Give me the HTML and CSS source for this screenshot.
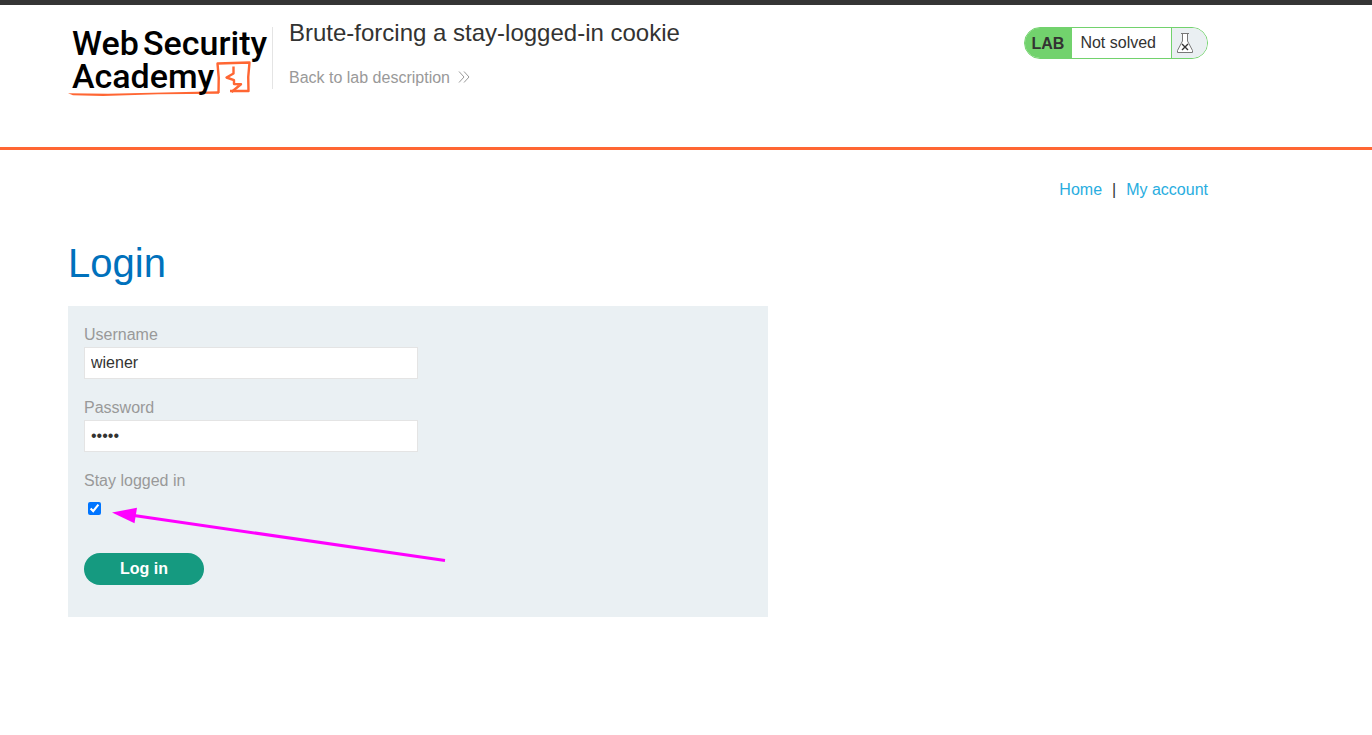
FILE: index.html
```html
<!DOCTYPE html>
<html lang="en">
<head>
<meta charset="utf-8">
<meta name="viewport" content="width=device-width, initial-scale=1">
<title>Brute-forcing a stay-logged-in cookie</title>
<link rel="stylesheet" href="styles.css">
</head>
<body>
<header class="lab-header">
  <div class="container header-row">
    <a class="logo" href="#" aria-label="Web Security Academy">
      <svg width="204" height="76" viewBox="0 0 204 76">
        <path class="logo-rule" d="M0 68.300 L40 68.800 L151 66.300 V68.800 L90 69.300 L35 71 L5 70.300 Z"/>
        <g class="logo-line">
          <path d="M150.500 68 Q151.500 53 149.500 38.500 L181.500 37.500 Q179.500 52 180.500 66 L162 66"/>
          <path d="M165.500 41.500 V48.500 L158.500 52.500 L166 55.200 V59 L173 59.300 L163.500 67"/>
        </g>
        <g class="logo-text">
          <text x="4" y="30">Web</text>
          <text x="75" y="30">Security</text>
          <text x="4" y="63">Academy</text>
        </g>
      </svg>
    </a>
    <div class="title-block">
      <h2 class="title">Brute-forcing a stay-logged-in cookie</h2>
      <a class="back-link" href="#">Back to lab description
        <svg class="chevrons" width="12" height="12" viewBox="0 0 12 12"><path d="M1 .5 L6 6 L1 11.500 M6 .5 L11 6 L6 11.500"/></svg>
      </a>
    </div>
    <div class="lab-status">
      <span class="lab-tag">LAB</span>
      <span class="lab-state">Not solved</span>
      <span class="lab-flask">
        <svg width="18" height="22" viewBox="0 0 18 22">
          <path class="flask-body" d="M6.500 1.500 V9 L1.500 18.500 V20.500 H16.500 V18.500 L11.500 9 V1.500"/>
          <path class="flask-lip" d="M5 1.500 H13"/>
          <path class="flask-cross" d="M6 12 L12 18 M12 12 L6 18"/>
        </svg>
      </span>
    </div>
  </div>
</header>
<main class="container">
  <nav class="top-links">
    <a href="#">Home</a><span>|</span><a href="#">My account</a>
  </nav>
  <h1 class="heading">Login</h1>
  <form class="login-form">
    <label for="username">Username</label>
    <input class="field" id="username" type="text" value="wiener">
    <label for="password">Password</label>
    <input class="field" id="password" type="password" value="peter">
    <label for="stay">Stay logged in</label>
    <input class="check" id="stay" type="checkbox" checked>
    <button class="submit" type="button">Log in</button>
    <svg class="arrow" width="336" height="56" viewBox="0 0 336 56" aria-hidden="true">
      <path class="arrow-shaft" d="M22 8.500 L333 53.500"/>
      <path class="arrow-head" d="M0 5.500 L25 .8 L22.500 16.200 Z"/>
    </svg>
  </form>
</main>
</body>
</html>
```
FILE: styles.css
```css
* {
  box-sizing: border-box;
}

body {
  margin: 0;
  background: #fff;
  color: #333332;
  font: 16px/24px "Liberation Sans", Arial, sans-serif;
}

a {
  color: #29ade0;
  text-decoration: none;
}

.container {
  padding: 0 164px 0 68px;
}

.lab-header {
  border-top: 5px solid #353535;
  border-bottom: 3px solid #ff6633;
}

.header-row {
  display: flex;
  align-items: flex-start;
  padding-top: 20px;
  padding-bottom: 46px;
}

.logo svg {
  display: block;
}

.logo-text {
  fill: #000;
  font: 500 34px Roboto, sans-serif;
}

.logo-rule {
  fill: #ff6633;
}

.logo-line {
  fill: none;
  stroke: #ff6633;
  stroke-width: 2.4;
  stroke-linejoin: round;
}

.title-block {
  display: flex;
  flex-direction: column;
  height: 62px;
  margin-top: 2px;
  padding-left: 16px;
  border-left: 1px solid #e4e4e4;
}

.title {
  margin: -8px 0 19px;
  font-size: 24px;
  font-weight: 400;
  line-height: 28px;
}

.back-link {
  color: #999;
}

.chevrons {
  margin-left: 4px;
  fill: none;
  stroke: #999;
}

.lab-status {
  display: flex;
  height: 32px;
  margin-top: 2px;
  margin-left: auto;
  overflow: hidden;
  border: 1px solid #72d26d;
  border-radius: 16px;
  line-height: 30px;
}

.lab-tag {
  padding: 0 8px 0 7px;
  background: #72d26d;
  font-weight: 700;
  line-height: 32px;
}

.lab-state {
  padding: 0 15px 0 8px;
}

.lab-flask {
  display: flex;
  align-items: center;
  width: 36px;
  padding-left: 4px;
  border-left: 1px solid #72d26d;
  background: #eaeff2;
}

.lab-flask svg {
  fill: none;
  stroke: #777;
}

.flask-body {
  fill: #fff;
}

.flask-cross {
  stroke: #333;
  stroke-width: 1.4;
}

.top-links {
  display: flex;
  justify-content: flex-end;
  gap: 10px;
  padding-top: 28px;
}

.heading {
  margin: 37px 0 19px;
  color: #0071bc;
  font-size: 40px;
  font-weight: 400;
  line-height: 48px;
}

.login-form {
  position: relative;
  display: flex;
  flex-direction: column;
  align-items: flex-start;
  max-width: 700px;
  padding: 16px 16px 32px;
  background: #eaf0f3;
}

.login-form label {
  color: #999;
  line-height: 25px;
}

.field {
  width: 50%;
  height: 32px;
  margin: 0 0 16px;
  padding: 0 6px;
  border: 1px solid #e4e4e4;
  background: #fff;
  color: #333332;
  font: inherit;
}

.check {
  width: 13px;
  height: 13px;
  margin: 9px 4px 38px;
}

.submit {
  width: 120px;
  height: 32px;
  padding: 0;
  border: 0;
  border-radius: 16px;
  background: #159a80;
  color: #fff;
  font: inherit;
  font-weight: 700;
}

.arrow {
  position: absolute;
  top: 201px;
  left: 44px;
}

.arrow-shaft {
  fill: none;
  stroke: #ff00ff;
  stroke-width: 3;
}

.arrow-head {
  fill: #ff00ff;
}
```
